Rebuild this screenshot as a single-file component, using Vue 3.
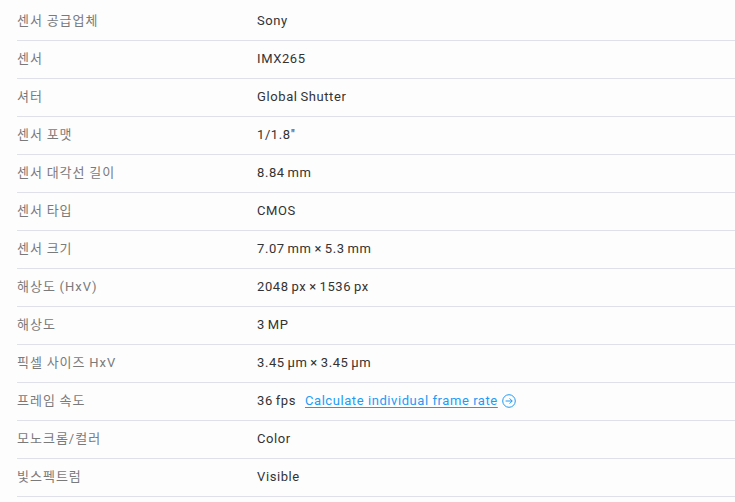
<script setup>
const rows = [
  ['센서 공급업체', 'Sony'],
  ['센서', 'IMX265'],
  ['셔터', 'Global Shutter'],
  ['센서 포맷', '1/1.8"'],
  ['센서 대각선 길이', '8.84 mm'],
  ['센서 타입', 'CMOS'],
  ['센서 크기', '7.07 mm × 5.3 mm'],
  ['해상도 (HxV)', '2048 px × 1536 px'],
  ['해상도', '3 MP'],
  ['픽셀 사이즈 HxV', '3.45 µm × 3.45 µm'],
  ['프레임 속도', '36 fps', true],
  ['모노크롬/컬러', 'Color'],
  ['빛스펙트럼', 'Visible'],
]
</script>

<template>
  <div class="table">
    <div v-for="r in rows" :key="r[0]" class="row">
      <div class="label">{{ r[0] }}</div>
      <div class="value">
        <span>{{ r[1] }}</span>
        <a v-if="r[2]" class="link" href="#">Calculate individual frame rate</a>
        <svg v-if="r[2]" class="icon" width="14" height="14" viewBox="0 0 14 14" fill="none" stroke="#1e9bf5" stroke-width="1">
          <circle cx="7" cy="7" r="6.3" />
          <path d="M3.6 7H10.2M7.6 4.4 10.2 7 7.6 9.6" />
        </svg>
      </div>
    </div>
  </div>
</template>

<style scoped>
.table { width: 735px; height: 502px; overflow: hidden; background: #fdfdfe; font-family: "Roboto", "Noto Sans CJK KR", sans-serif; font-size: 13px; letter-spacing: 0.6px; padding-top: 3px; box-sizing: border-box; }
.row { height: 38px; margin-left: 17px; border-bottom: 1px solid #e0e0ea; display: flex; align-items: center; padding-bottom: 4px; box-sizing: border-box; }
.label { width: 240px; color: #7a7a7a; letter-spacing: 1px; word-spacing: -0.5px; }
.value { color: #333; display: flex; align-items: center; letter-spacing: 0.6px; word-spacing: -1px; padding-top: 2px; }
.link { color: #1e9bf5; margin-left: 9px; text-decoration: underline; letter-spacing: 0.57px; word-spacing: 0; text-underline-offset: 2px; }
.icon { margin-left: 4px; }
</style>
<style>
html, body { margin: 0; background: #fdfdfe; }
</style>
